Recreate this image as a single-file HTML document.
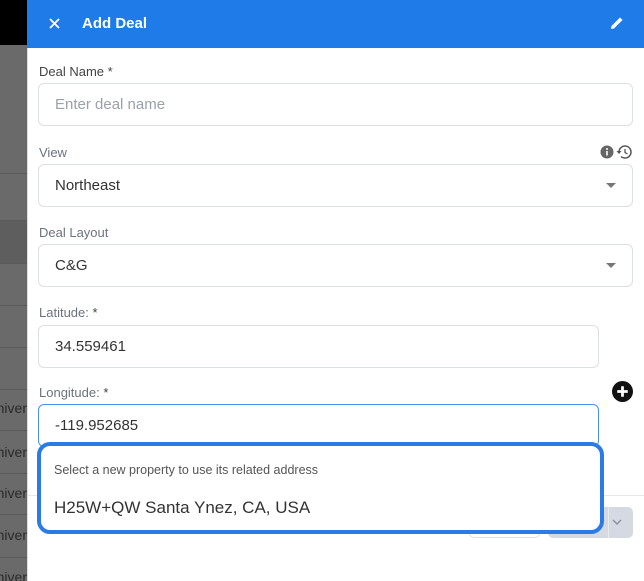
<!DOCTYPE html>
<html><head><meta charset="utf-8"><style>
*{box-sizing:border-box;margin:0;padding:0}
body{width:644px;height:581px;overflow:hidden;position:relative;background:#fff;font-family:"Liberation Sans",sans-serif}
.left{position:absolute;left:0;top:0;width:27px;height:581px;background:#6a6a6a;overflow:hidden}
.left .blk{position:absolute;left:0;top:0;width:27px;height:45px;background:#000}
.left .ln{position:absolute;left:0;width:27px;height:1px;background:#5a5a5a}
.left .t{position:absolute;right:0;font-size:14px;color:#2a2a2a}
.hdr{position:absolute;left:27px;top:0;width:617px;height:48px;background:#1f7be8;color:#fff}
.hdr .ti{position:absolute;left:55px;top:15px;font-size:15px;font-weight:bold}
.lbl{position:absolute;left:39px;font-size:13px;color:#6b7280}
.lbl b{color:#444;font-weight:normal}
.inp{position:absolute;left:38px;height:43px;border:1px solid #dcdfe4;border-radius:6px;font-size:15px;color:#333;padding:12px 0 0 16px}
.car{position:absolute;right:16px;top:18px;width:0;height:0;border-left:5px solid transparent;border-right:5px solid transparent;border-top:5px solid #777}
</style></head><body>
<div class="left">
<div class="blk"></div>
<div style="position:absolute;top:220px;left:0;width:27px;height:43px;background:#5e5e5e"></div>
<div class="ln" style="top:173px"></div><div class="ln" style="top:220px"></div><div class="ln" style="top:263px"></div><div class="ln" style="top:305px"></div><div class="ln" style="top:347px"></div><div class="ln" style="top:389px"></div><div class="ln" style="top:430px"></div><div class="ln" style="top:473px"></div><div class="ln" style="top:514px"></div><div class="ln" style="top:557px"></div>
<div class="t" style="top:400px">niver</div><div class="t" style="top:444px">niver</div><div class="t" style="top:485px">niver</div><div class="t" style="top:527px">niver</div><div class="t" style="top:569px">niver</div>
</div>
<div class="hdr">
<svg style="position:absolute;left:22px;top:18px" width="11" height="11" viewBox="0 0 11 11"><path d="M1 1 L10 10 M10 1 L1 10" stroke="#fff" stroke-width="1.8"/></svg>
<span class="ti">Add Deal</span>
<svg style="position:absolute;left:583px;top:16px" width="14" height="14" viewBox="0 0 14 14"><path d="M1 13 L1.5 10 L10 1.5 L12.5 4 L4 12.5 Z" fill="#fff"/></svg></div>
<div style="position:absolute;left:27px;top:48px;width:1px;height:533px;background:#ddd"></div>

<div class="lbl" style="top:64px"><b>Deal Name *</b></div>
<div class="inp" style="top:83px;width:595px;color:#9aa1ab">Enter deal name</div>

<div class="lbl" style="top:145px">View</div>
<svg style="position:absolute;left:600px;top:145px" width="32" height="14" viewBox="0 0 32 14"><circle cx="7" cy="7" r="6.5" fill="#666"/><rect x="6.2" y="6" width="1.6" height="4.5" fill="#fff"/><circle cx="7" cy="4" r="1" fill="#fff"/><path d="M19 7 A6 6 0 1 1 21 11.5" fill="none" stroke="#555" stroke-width="1.5"/><path d="M16.5 6 L19 9 L21.5 6 Z" fill="#555"/><path d="M25 4 V7.5 L27.5 9" fill="none" stroke="#555" stroke-width="1.3"/></svg>
<div class="inp" style="top:164px;width:595px">Northeast<div class="car"></div></div>

<div class="lbl" style="top:225px">Deal Layout</div>
<div class="inp" style="top:244px;width:595px">C&amp;G<div class="car"></div></div>

<div class="lbl" style="top:305px">Latitude: <b>*</b></div>
<div class="inp" style="top:325px;width:561px">34.559461</div>

<div class="lbl" style="top:385px">Longitude: <b>*</b></div>
<svg style="position:absolute;left:612px;top:381px" width="21" height="21" viewBox="0 0 20 20"><circle cx="10" cy="10" r="10" fill="#111"/><path d="M10 5 V15 M5 10 H15" stroke="#fff" stroke-width="2.6"/></svg>
<div class="inp" style="top:404px;width:561px;border-color:#4a90e8">-119.952685</div>

<div style="position:absolute;left:28px;top:495px;width:616px;height:1px;background:#e5e7eb"></div>
<div style="position:absolute;left:469px;top:507px;width:71px;height:31px;border:1px solid #dcdfe4;border-radius:5px"></div>
<div style="position:absolute;left:548px;top:507px;width:85px;height:31px;background:#d5dae2;border-radius:5px"></div>
<div style="position:absolute;left:608px;top:507px;width:1px;height:31px;background:#e8ebef"></div>
<svg style="position:absolute;left:612px;top:519px" width="10" height="7" viewBox="0 0 10 7"><path d="M1 1 L5 5 L9 1" fill="none" stroke="#8a909a" stroke-width="1.4"/></svg>

<div style="position:absolute;left:37px;top:442px;width:567px;height:92px;border:4px solid #2a7be6;border-radius:13px;background:#fff">
<div style="position:absolute;left:13px;top:17px;font-size:12.5px;color:#555">Select a new property to use its related address</div>
<div style="position:absolute;left:13px;top:52px;font-size:17px;color:#333">H25W+QW Santa Ynez, CA, USA</div>
</div>
</body></html>
